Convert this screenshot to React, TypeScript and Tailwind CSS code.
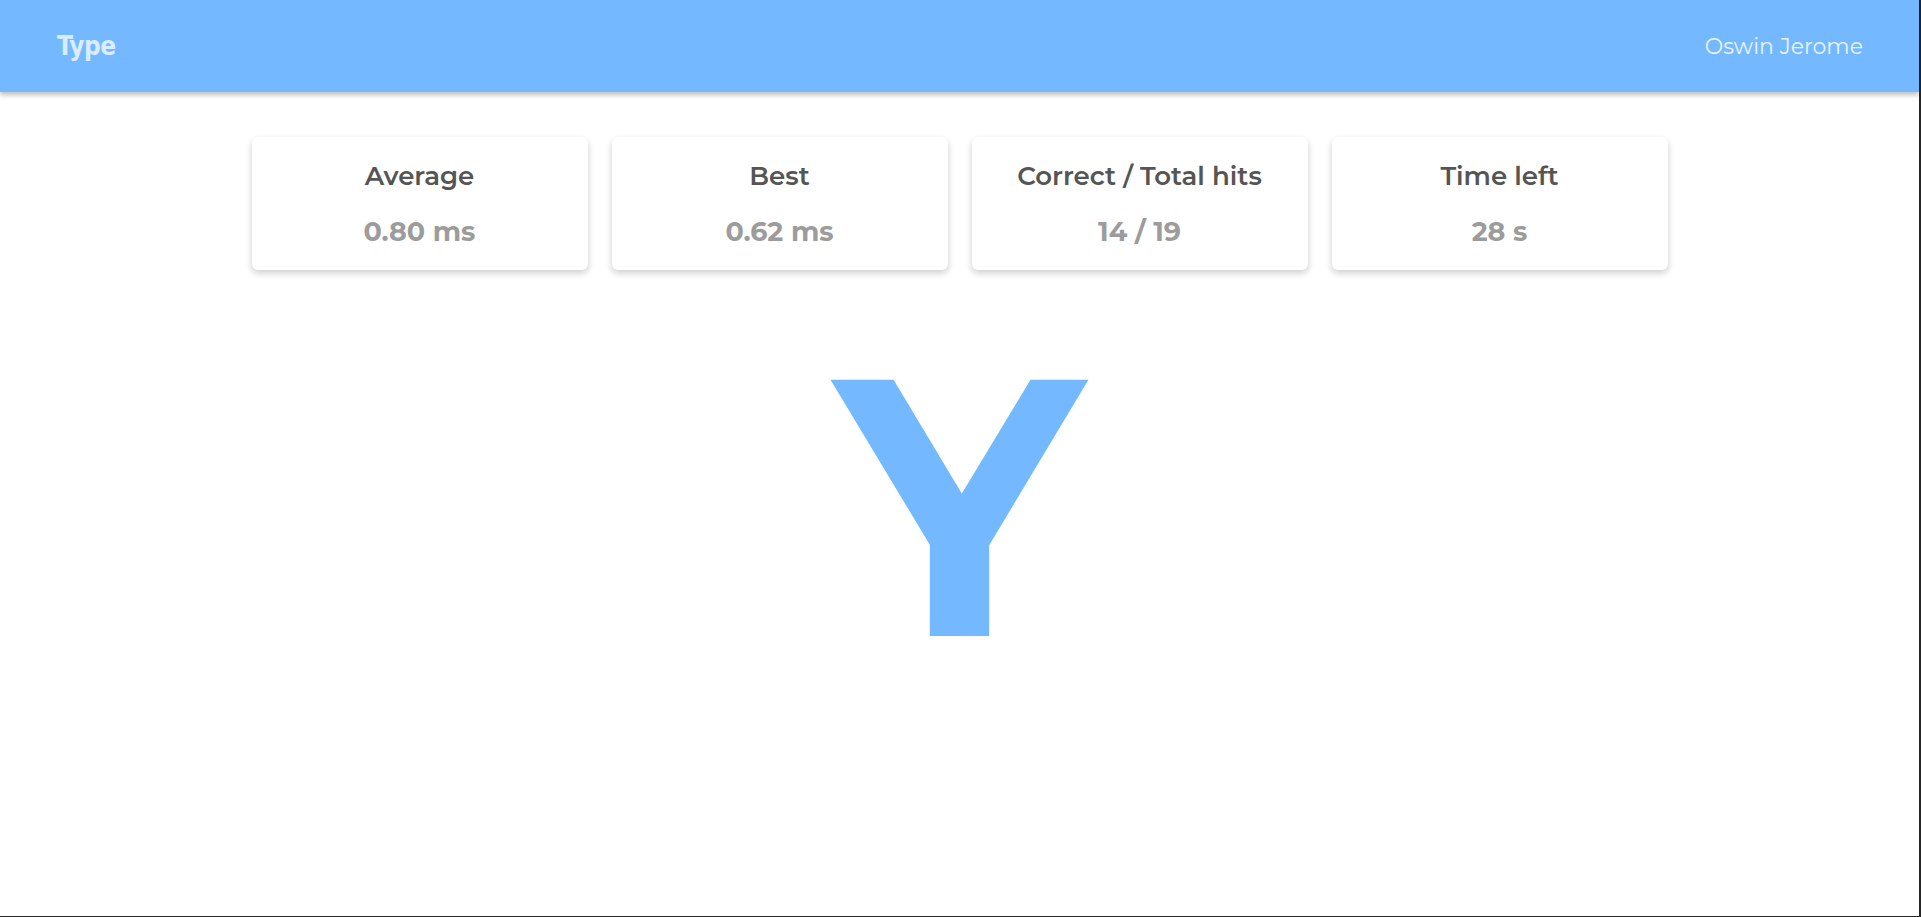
const stats = [
  { label: 'Average', value: '0.80 ms' },
  { label: 'Best', value: '0.62 ms' },
  { label: 'Correct / Total hits', value: '14 / 19' },
  { label: 'Time left', value: '28 s' },
];

function StatCard({ label, value }: { label: string; value: string }) {
  return (
    <div className="flex h-[133px] w-[336px] flex-col items-center gap-[29px] rounded-md bg-white pt-[26px] shadow-[0_3px_7px_rgba(0,0,0,0.2)]">
      <h3 className="text-[26px] leading-none font-semibold text-[#555555]">{label}</h3>
      <p className="text-[27px] leading-none font-bold text-[#9c9c9c]">{value}</p>
    </div>
  );
}

export default function App() {
  return (
    <div className="flex h-[917px] w-full flex-col bg-[#262626] font-['Montserrat','DejaVu_Sans',sans-serif]">
      <div className="flex h-[916px] w-[1919px] flex-col bg-white">
        {/* Header */}
        <header className="relative z-10 flex h-[92px] shrink-0 items-center justify-between bg-[#74b9ff] pr-[56px] pl-[57px] shadow-[0_3px_5px_rgba(0,0,0,0.25)]">
          <span className="font-['DejaVu_Sans_Condensed','DejaVu_Sans',sans-serif] text-[26px] font-bold tracking-[-0.5px] text-[#d9edff]">
            Type
          </span>
          <span className="text-[22px] font-normal text-[#e8f3ff]">Oswin Jerome</span>
        </header>

        {/* Stats */}
        <section className="mt-[45px] flex justify-center gap-[24px]">
          {stats.map((s) => (
            <StatCard key={s.label} label={s.label} value={s.value} />
          ))}
        </section>

        {/* Current key */}
        <main className="flex justify-center pt-[35px]">
          <span className="text-[366px] leading-[400px] font-bold text-[#74b9ff]">Y</span>
        </main>
      </div>
    </div>
  );
}
